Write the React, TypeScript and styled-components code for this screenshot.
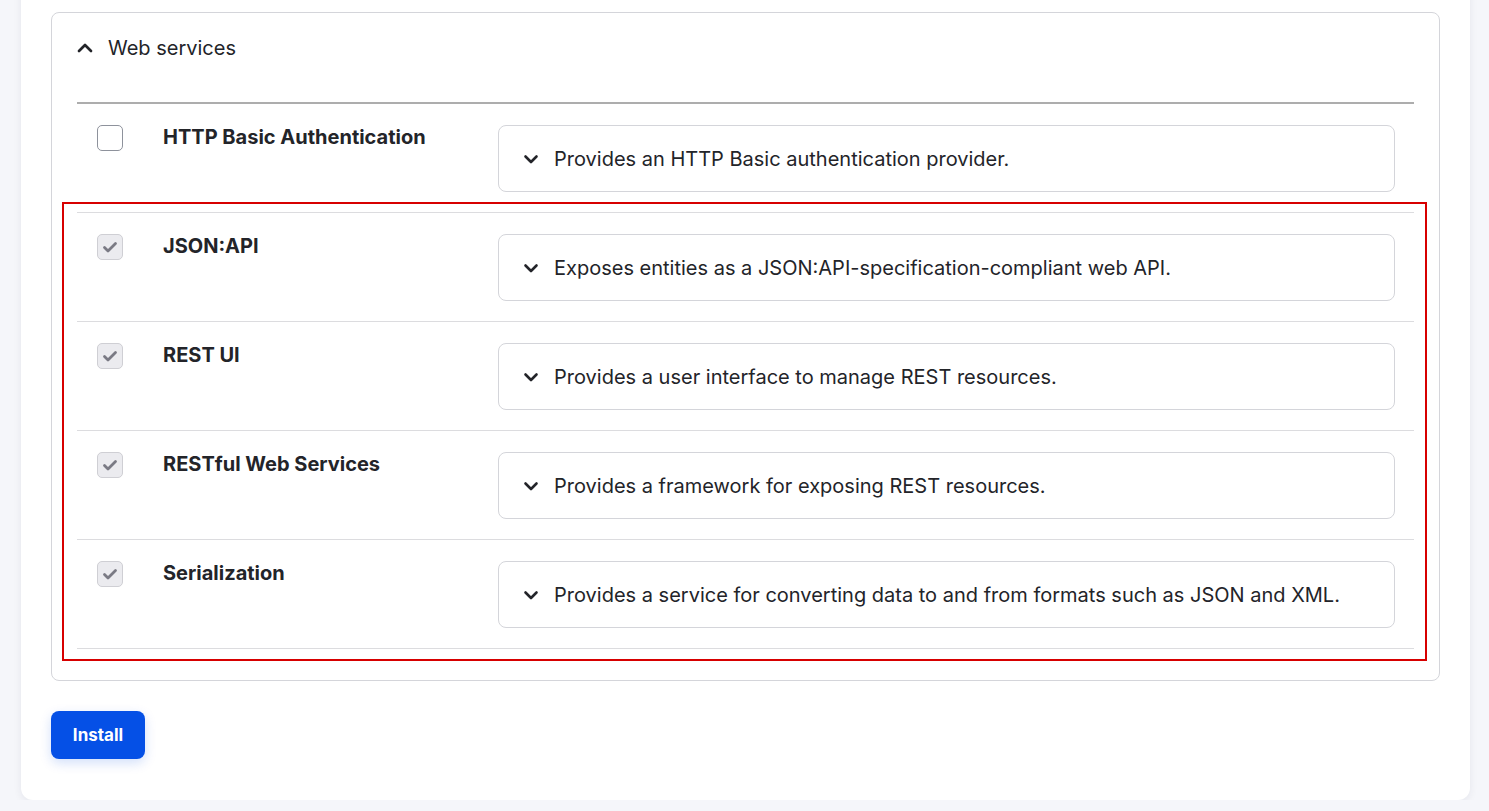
import React from "react";
import styled, { createGlobalStyle } from "styled-components";

const Global = createGlobalStyle`
  html, body { margin: 0; padding: 0; }
  body {
    background: #f5f6fa;
    font-family: Inter, "Noto Sans", "Liberation Sans", sans-serif;
    color: #232429;
    overflow: hidden;
  }
`;

const Page = styled.div`
  padding: 0 19px 0 21px;
`;

const Card = styled.div`
  margin-top: -18px;
  background: #fff;
  border-radius: 12px;
  box-shadow: 0 2px 8px rgba(20, 30, 60, 0.07);
  padding: 30px 30px 41px 30px;
`;

const Fieldset = styled.section`
  border: 1px solid #d4d5da;
  border-radius: 8px;
  padding: 0 25px 31px 25px;
`;

const Summary = styled.div`
  display: flex;
  align-items: center;
  gap: 15px;
  height: 70px;
  font-size: 20px;
  color: #232429;
`;

const HeaderRule = styled.div`
  margin-top: 19px;
  height: 2px;
  background: #adadad;
`;

const Group = styled.div`
  position: relative;
  &::after {
    content: "";
    position: absolute;
    top: -11px;
    left: -15px;
    right: -13px;
    bottom: -12px;
    border: 2px solid #d70000;
    pointer-events: none;
  }
`;

const Row = styled.div`
  display: grid;
  grid-template-columns: 66px 335px 1fr;
  align-items: start;
  padding: 21px 19px 20px 20px;
  border-bottom: 1px solid #dcdcdf;
`;

const Check = styled.span<{ $checked?: boolean }>`
  box-sizing: border-box;
  width: 26px;
  height: 26px;
  border-radius: 5px;
  border: 1px solid ${(p) => (p.$checked ? "#cfcfd4" : "#8e929c")};
  background: ${(p) => (p.$checked ? "#ebebef" : "#fff")};
  display: flex;
  align-items: center;
  justify-content: center;
`;

const Label = styled.div`
  font-size: 20px;
  font-weight: 700;
  line-height: 24px;
  color: #232429;
`;

const Desc = styled.div`
  box-sizing: border-box;
  height: 67px;
  border: 1px solid #d4d5da;
  border-radius: 8px;
  display: flex;
  align-items: center;
  gap: 15px;
  padding-left: 24px;
  font-size: 20px;
  color: #232429;
`;

const InstallButton = styled.button`
  margin-top: 30px;
  width: 94px;
  height: 48px;
  border: none;
  border-radius: 8px;
  background: #0550e6;
  color: #fff;
  font-family: Inter, "Noto Sans", sans-serif;
  font-size: 17px;
  font-weight: 700;
  box-shadow: 0 4px 12px rgba(5, 80, 230, 0.18);
`;

const ChevronUp = () => (
  <svg width="16" height="16" viewBox="0 0 16 16" fill="none">
    <path d="M2 11 L8 5 L14 11" stroke="#232429" strokeWidth="2.7" strokeLinecap="round" strokeLinejoin="round" />
  </svg>
);

const ChevronDown = () => (
  <svg width="16" height="16" viewBox="0 0 16 16" fill="none">
    <path d="M2.5 5.5 L8 11 L13.5 5.5" stroke="#232429" strokeWidth="2.6" strokeLinecap="round" strokeLinejoin="round" />
  </svg>
);

const CheckMark = () => (
  <svg width="16" height="16" viewBox="0 0 16 16" fill="none">
    <path d="M2.5 8.5 L6 12 L13.5 4.5" stroke="#7a7a84" strokeWidth="2.8" strokeLinecap="round" strokeLinejoin="round" />
  </svg>
);

type Mod = { name: string; desc: string; checked: boolean };

const first: Mod = {
  name: "HTTP Basic Authentication",
  desc: "Provides an HTTP Basic authentication provider.",
  checked: false,
};

const others: Mod[] = [
  { name: "JSON:API", desc: "Exposes entities as a JSON:API-specification-compliant web API.", checked: true },
  { name: "REST UI", desc: "Provides a user interface to manage REST resources.", checked: true },
  { name: "RESTful Web Services", desc: "Provides a framework for exposing REST resources.", checked: true },
  { name: "Serialization", desc: "Provides a service for converting data to and from formats such as JSON and XML.", checked: true },
];

const ModuleRow = ({ m }: { m: Mod }) => (
  <Row>
    <Check $checked={m.checked}>{m.checked && <CheckMark />}</Check>
    <Label>{m.name}</Label>
    <Desc>
      <ChevronDown />
      <span>{m.desc}</span>
    </Desc>
  </Row>
);

export default function App() {
  return (
    <>
      <Global />
      <Page>
        <Card>
          <Fieldset>
            <Summary>
              <ChevronUp />
              <span>Web services</span>
            </Summary>
            <HeaderRule />
            <ModuleRow m={first} />
            <Group>
              {others.map((m) => (
                <ModuleRow key={m.name} m={m} />
              ))}
            </Group>
          </Fieldset>
          <InstallButton>Install</InstallButton>
        </Card>
      </Page>
    </>
  );
}
